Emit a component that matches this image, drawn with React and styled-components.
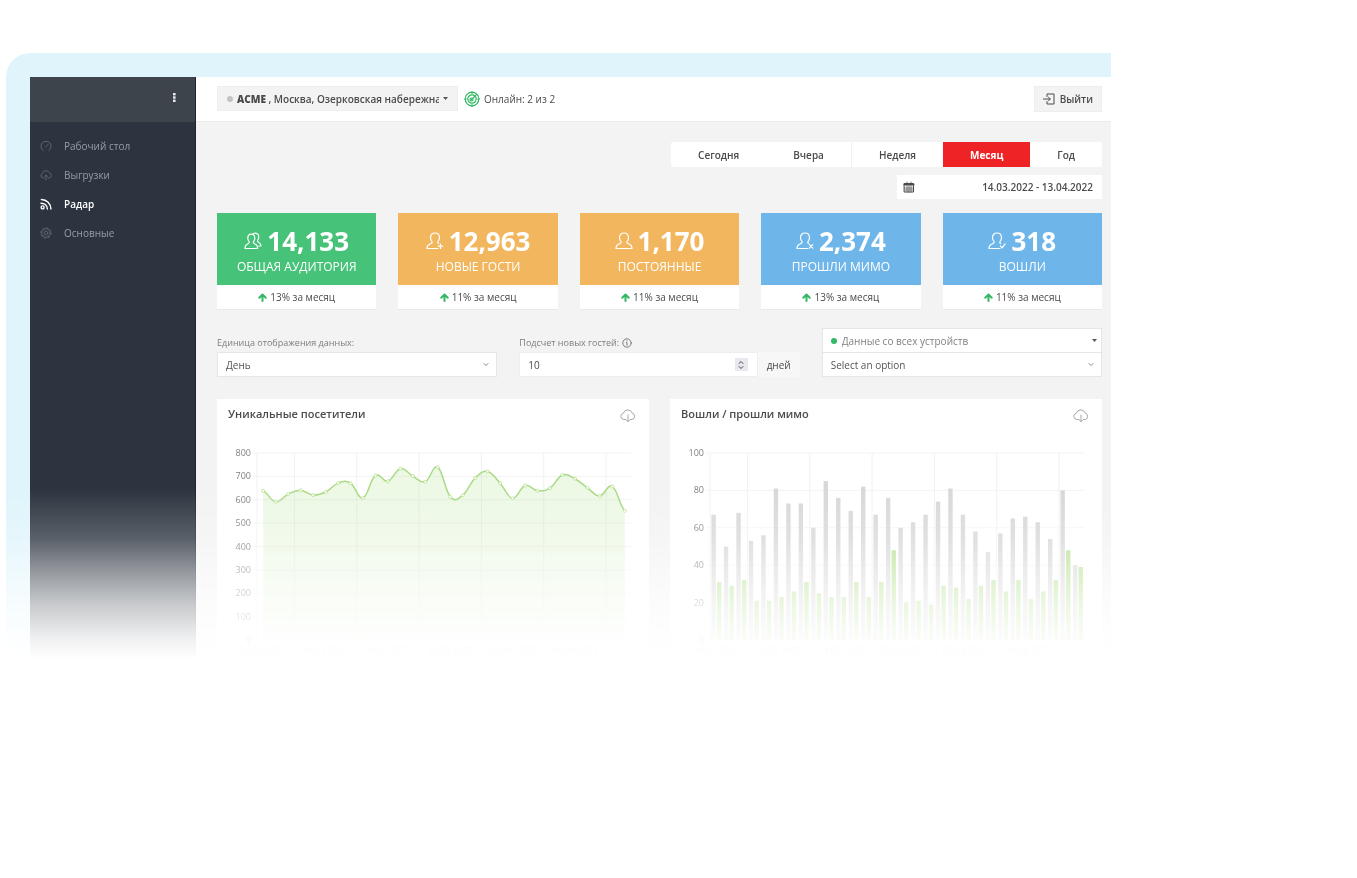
import React from "react";
import styled, { createGlobalStyle, css } from "styled-components";

const GlobalStyle = createGlobalStyle`
  *, *::before, *::after { box-sizing: border-box; }
  body {
    margin: 0;
    background: #fff;
    color: #4b4b4b;
    font-family: "Open Sans", "Noto Sans", sans-serif;
    font-size: 10px;
    line-height: 16px;
  }
  button, input, select { font: inherit; color: inherit; margin: 0; }
  button { cursor: pointer; }
`;

const Page = styled.div`
  padding: 53px 246px 0 6px;
`;

const Frame = styled.div`
  display: flex;
  min-height: 606px;
  border: solid #dff4fb;
  border-width: 24px 0 0 24px;
  border-top-left-radius: 24px;
  mask-image: linear-gradient(
    #000 0, #000 436px, rgba(0, 0, 0, 0.78) 486px, rgba(0, 0, 0, 0.5) 519px,
    rgba(0, 0, 0, 0.26) 552px, rgba(0, 0, 0, 0.07) 586px, transparent 606px
  );
`;

const Sidebar = styled.aside`
  flex: 0 0 166px;
  background: #2c343f;
  border-right: 1px solid #1e252e;
`;

const SidebarTop = styled.div`
  display: flex;
  align-items: center;
  justify-content: flex-end;
  height: 45px;
  padding: 0 17px 4px 0;
  background: #3d444c;
`;

const MenuButton = styled.button`
  display: flex;
  padding: 0;
  border: 0;
  background: none;
  color: #e8eaec;
`;

const Nav = styled.nav`
  display: flex;
  flex-direction: column;
  padding-top: 9px;
`;

const NavLink = styled.a`
  display: flex;
  align-items: center;
  gap: 12px;
  height: 29px;
  padding-left: 10px;
  color: ${(p) => (p.$active ? "#fff" : "#989da4")};
  font-weight: ${(p) => (p.$active ? 600 : 400)};
  text-decoration: none;
  svg { color: ${(p) => (p.$active ? "#fff" : "#5d656f")}; }
`;

const Main = styled.main`
  flex: 1;
  min-width: 0;
  background: #f3f3f3;
`;

const Header = styled.header`
  display: flex;
  align-items: flex-start;
  height: 45px;
  padding: 9px 9px 0 21px;
  background: #fff;
  border-bottom: 1px solid #ececec;
`;

const PlaceButton = styled.button`
  display: flex;
  align-items: center;
  gap: 4px;
  width: 241px;
  height: 25px;
  padding: 0 9px;
  border: 1px solid #eeeeee;
  background: #f3f3f3;
  font-weight: 600;
`;

const PlaceName = styled.span`
  flex: 1;
  overflow: hidden;
  white-space: nowrap;
  text-align: left;
`;

const Dot = styled.span`
  flex: none;
  width: 6px;
  height: 6px;
  border-radius: 50%;
  background: ${(p) => p.$color};
`;

const Online = styled.span`
  display: flex;
  align-items: center;
  gap: 4px;
  height: 26px;
  margin-left: 6px;
`;

const LogoutButton = styled.button`
  display: flex;
  align-items: center;
  gap: 5px;
  height: 26px;
  margin-left: auto;
  padding: 0 8px;
  border: 1px solid #eeeeee;
  background: #f3f3f3;
  font-weight: 600;
`;

const Content = styled.div`
  padding: 20px 9px 0 21px;
`;

const Period = styled.div`
  display: flex;
  flex-direction: column;
  align-items: flex-end;
  gap: 8px;
`;

const Ranges = styled.div`
  display: flex;
  border-radius: 2px;
  background: #fff;
`;

const RangeButton = styled.button`
  height: 25px;
  padding: 0 27px;
  border: 0;
  border-left: ${(p) => (p.$divided ? "1px solid #f0f0f0" : "0")};
  background: ${(p) => (p.$active ? "#ee2326" : "none")};
  color: ${(p) => (p.$active ? "#fff" : "#4b4b4b")};
  font-weight: ${(p) => (p.$active ? 700 : 600)};
`;

const DateField = styled.label`
  display: flex;
  align-items: center;
  width: 205px;
  height: 24px;
  padding: 0 9px 0 6px;
  background: #fff;
`;

const DateInput = styled.input`
  flex: 1;
  min-width: 0;
  padding: 0;
  border: 0;
  background: none;
  font-weight: 600;
  text-align: right;
`;

const Stats = styled.section`
  display: grid;
  grid-template-columns: repeat(5, 1fr);
  gap: 22px;
  margin-top: 14px;
`;

const StatCard = styled.article`
  background: #fff;
  border-bottom: 1px solid #e9e9e9;
  text-align: center;
`;

const StatHead = styled.div`
  height: 72px;
  padding-top: 12px;
  background: ${(p) => p.$color};
  color: #fff;
`;

const StatValue = styled.div`
  display: flex;
  align-items: center;
  justify-content: center;
  gap: 5px;
  font-size: 26px;
  font-weight: 700;
  line-height: 32px;
`;

const StatLabel = styled.div`
  font-size: 12px;
  line-height: 19px;
`;

const StatTrend = styled.div`
  display: flex;
  align-items: center;
  justify-content: center;
  gap: 3px;
  height: 24px;
`;

const Filters = styled.section`
  display: grid;
  grid-template-columns: repeat(3, 1fr);
  align-items: end;
  gap: 22px;
  margin-top: 18px;
`;

const Field = styled.div`
  display: flex;
  flex-direction: column;
`;

const FieldLabel = styled.label`
  display: flex;
  align-items: center;
  gap: 3px;
  height: 19px;
  color: #7d7d7d;
  font-size: 9px;
`;

const controlBox = css`
  display: flex;
  align-items: center;
  height: 25px;
  background: #fff;
  border: 1px solid #e6e6e6;
`;

const SelectBox = styled.div`
  ${controlBox}
  gap: 5px;
  padding: 0 4px 0 8px;
  color: ${(p) => (p.$muted ? "#808080" : "#555")};
  & + & { margin-top: -1px; }
`;

const Select = styled.select`
  flex: 1;
  min-width: 0;
  padding: 0;
  border: 0;
  appearance: none;
  background: none;
`;

const NumberRow = styled.div`
  display: flex;
`;

const NumberBox = styled.div`
  ${controlBox}
  flex: 1;
  padding: 0 9px 0 8px;
  border-color: #eeeeee;
`;

const NumberInput = styled.input`
  flex: 1;
  min-width: 0;
  padding: 0;
  border: 0;
  background: none;
  appearance: textfield;
  &::-webkit-inner-spin-button { display: none; }
`;

const Stepper = styled.span`
  display: flex;
  align-items: center;
  justify-content: center;
  width: 13px;
  height: 13px;
  background: #e8e8ee;
`;

const Unit = styled.span`
  display: flex;
  align-items: center;
  justify-content: center;
  width: 42px;
  background: #f7f7f7;
`;

const Charts = styled.section`
  display: grid;
  grid-template-columns: repeat(2, 1fr);
  gap: 21px;
  margin-top: 22px;
`;

const ChartCard = styled.article`
  background: #fff;
`;

const ChartHead = styled.div`
  display: flex;
  align-items: center;
  justify-content: space-between;
  height: 30px;
  padding: 0 13px 0 11px;
`;

const ChartTitle = styled.h2`
  margin: 0;
  font-size: 11px;
  font-weight: 600;
`;

const DownloadButton = styled.button`
  display: flex;
  padding: 3px 0 0;
  border: 0;
  background: none;
  color: #a6a6a6;
`;

const Chart = styled.svg`
  display: block;
  width: 100%;
  height: auto;
  margin-top: 11px;
  font-size: 9px;
`;

const Icon = ({ size = 12, width = 1, box = 24, children, ...rest }) => (
  <svg width={size} height={size} viewBox={`0 0 ${box} ${box}`} fill="none" stroke="currentColor"
    strokeWidth={width} strokeLinecap="round" strokeLinejoin="round" aria-hidden="true" {...rest}>
    {children}
  </svg>
);

const GaugeIcon = () => (
  <Icon box={12}><path d="M3.200 10.600A5.100 5.100 0 1 1 8.800 10.600M5.500 7 8 4.400" /></Icon>
);
const CloudUpIcon = () => (
  <Icon box={12}><path d="M4 9H3A2.3 2.3 0 0 1 2.4 4.6 3.5 3.5 0 0 1 9 3.6 2.8 2.8 0 0 1 9.3 9H8M6 11V6.2M4.6 7.4 6 6l1.4 1.4" /></Icon>
);
const RadarIcon = () => (
  <Icon box={12} width={1.4}><circle cx="2.6" cy="9.4" r="1.5" /><path d="M1 5.200c3.600 0 6.400 2.400 6.400 5.800M1.400 1.500c5.200 0 9.500 4.200 9.500 9.500" /></Icon>
);
const GearIcon = () => (
  <Icon box={12}><circle cx="6" cy="6" r="4.2" /><circle cx="6" cy="6" r="1.8" /><circle cx="6" cy="6" r="5.2" strokeDasharray="1.6 2.48" /></Icon>
);
const CloudDownIcon = () => (
  <Icon size={16} box={16}><path d="M5.500 11.500H3.800A3.200 3.200 0 0 1 3.300 5.200 4.700 4.700 0 0 1 12.200 5 3.400 3.400 0 0 1 12.200 11.500H10.500M8 7v6.500M6.300 12 8 13.700l1.700-1.700" /></Icon>
);

const LONE_PERSON = "M1 16.500c0-2.800.7-3.600 2.600-4.300 1.800-.7 2.900-1 2.600-2.400C5 8.600 4.500 7.200 4.500 5.600 4.500 2.900 6.300 1 9 1s4.500 1.900 4.500 4.600c0 1.600-.5 3-1.700 4.200-.3 1.400.8 1.700 2.600 2.400 1.900.7 2.600 1.500 2.600 4.300z";
const MARKED_PERSON = "M12 16.500H1c0-2.800.7-3.600 2.600-4.300 1.800-.7 2.900-1 2.600-2.400C5 8.600 4.500 7.200 4.500 5.600 4.500 2.900 6.300 1 9 1s4.500 1.900 4.500 4.600c0 1.600-.5 3-1.700 4.200-.2.9.1 1.300.8 1.600";
const FRONT_PERSON = "M1 16.500c0-2.800.6-3.600 2.200-4.300 1.500-.7 2.300-1 2-2.300C4.200 8.800 3.800 7.700 3.800 6.200 3.800 3.900 5.200 2.200 7.300 2.200s3.500 1.700 3.500 4c0 1.500-.4 2.600-1.400 3.700-.3 1.300.5 1.600 2 2.300 1.600.7 2.200 1.500 2.200 4.300z";

const personShapes = {
  pair: [FRONT_PERSON, "M9.500 1.600C12 .2 15 2 14.800 5.200c-.1 1.500-.5 2.500-1.300 3.400-.2 1.200.4 1.500 1.600 2.100 1.500.7 1.900 1.300 1.900 3.300h-2.200"],
  plus: [MARKED_PERSON, "M14.500 12v4.400M12.300 14.200h4.400"],
  none: [LONE_PERSON],
  cross: [MARKED_PERSON, "M13.300 12.600l3.400 3.600M16.700 12.600l-3.400 3.600"],
  check: [MARKED_PERSON, "M12.400 14l1.700 1.900 3-4"],
};

const PersonIcon = ({ mark }) => (
  <Icon size={18} box={18} width={1.2}>
    {personShapes[mark].map((d) => <path key={d} d={d} />)}
  </Icon>
);

const OnlineIcon = () => (
  <Icon size={16} box={16} width={1.2} color="#35b865">
    <circle cx="8" cy="8" r="6.8" /><circle cx="8" cy="8" r="4.2" />
    <path d="M6.500 9.500 12.700 3.300M8 .6v1.800M8 13.600v1.800M.6 8h1.800M13.600 8h1.800" /><circle cx="7.5" cy="8.5" r="1.5" />
  </Icon>
);

const CaretIcon = () => (
  <svg width="5" height="3" viewBox="0 0 5 3" aria-hidden="true"><path d="M0 0h5L2.500 3z" fill="#555" /></svg>
);
const ChevronIcon = () => (
  <Icon size={12} box={12} color="#888"><path d="M4 4.500l2 2 2-2" /></Icon>
);
const ArrowUpIcon = () => (
  <Icon size={9} box={9} width={2} color="#35b865"><path d="M4.500 8V1.500M1.300 4.700 4.500 1.500 7.700 4.700" /></Icon>
);

const nav = [
  { label: "Рабочий стол", icon: <GaugeIcon /> },
  { label: "Выгрузки", icon: <CloudUpIcon /> },
  { label: "Радар", icon: <RadarIcon />, active: true },
  { label: "Основные", icon: <GearIcon /> },
];

const ranges = [
  { label: "Сегодня" },
  { label: "Вчера" },
  { label: "Неделя", divided: true },
  { label: "Месяц", active: true },
  { label: "Год" },
];

const stats = [
  { value: "14,133", label: "ОБЩАЯ АУДИТОРИЯ", trend: "13% за месяц", color: "#46c279", mark: "pair" },
  { value: "12,963", label: "НОВЫЕ ГОСТИ", trend: "11% за месяц", color: "#f2b65e", mark: "plus" },
  { value: "1,170", label: "ПОСТОЯННЫЕ", trend: "11% за месяц", color: "#f2b65e", mark: "none" },
  { value: "2,374", label: "ПРОШЛИ МИМО", trend: "13% за месяц", color: "#6eb6ea", mark: "cross" },
  { value: "318", label: "ВОШЛИ", trend: "11% за месяц", color: "#6eb6ea", mark: "check" },
];

const visitors = [638, 591, 624, 641, 620, 633, 671, 671, 607, 704, 679, 733, 701, 677, 739, 613, 619, 693, 721,
  671, 606, 661, 639, 650, 706, 690, 651, 616, 657, 553];
const passed = [67, 50, 68, 53, 56, 81, 73, 73, 60, 85, 76, 69, 82, 67, 76, 60, 63, 67, 74, 81, 67, 58, 47, 57, 65,
  66, 63, 54, 80, 40];
const entered = [31, 29, 32, 21, 21, 23, 26, 31, 25, 23, 23, 31, 23, 31, 48, 20, 21, 19, 29, 28, 22, 29, 32, 26, 32,
  22, 26, 32, 48, 39];
const dates = ["14.03.2022", "19.03.2022", "24.03.2022", "29.03.2022", "03.04.2022", "08.04.2022"];

const TOP = 13;
const BOTTOM = 200;
const LEFT = 40;
const RIGHT = 414;
const STEP = (RIGHT - LEFT) / 30;
const scaleY = (value, max) => BOTTOM - (value / max) * (BOTTOM - TOP);

const Axes = ({ max, tick }) => {
  const ticks = Array.from({ length: max / tick + 1 }, (_, i) => i * tick);
  return (
    <>
      {ticks.map((t) => (
        <g key={t}>
          <line x1={LEFT - 4} x2={RIGHT} y1={scaleY(t, max)} y2={scaleY(t, max)} stroke="#f3f3f3" />
          <text x={LEFT - 6} y={scaleY(t, max) + 3} textAnchor="end" fill="#808080">{t}</text>
        </g>
      ))}
      {[0, 3, 8, 13, 18, 23, 28].map((i) => (
        <line key={i} x1={LEFT + i * STEP} x2={LEFT + i * STEP} y1={TOP} y2={BOTTOM} stroke="#f1f1f1" />
      ))}
      {dates.map((d, i) => (
        <text key={d} x={LEFT + (i * 5 + 0.5) * STEP} y={214} textAnchor="middle" fill="#808080">{d}</text>
      ))}
    </>
  );
};

const smoothPath = (points) => {
  let d = `M${points[0][0]} ${points[0][1]}`;
  const slope = (i) => {
    const a = points[Math.max(i - 1, 0)];
    const b = points[Math.min(i + 1, points.length - 1)];
    return (b[1] - a[1]) * 0.2;
  };
  for (let i = 1; i < points.length; i++) {
    const [x0, y0] = points[i - 1];
    const [x1, y1] = points[i];
    const k = (x1 - x0) * 0.4;
    d += `C${x0 + k} ${y0 + slope(i - 1)} ${x1 - k} ${y1 - slope(i)} ${x1} ${y1}`;
  }
  return d;
};

const VisitorsChart = () => {
  const points = visitors.map((v, i) => [LEFT + (i + 0.5) * STEP, scaleY(v, 800)]);
  const line = smoothPath(points);
  return (
    <Chart viewBox="0 0 432 220" role="img" aria-label="Уникальные посетители">
      <Axes max={800} tick={100} />
      <path d={`${line}V${BOTTOM}H${points[0][0]}Z`} fill="#a6dc7c" fillOpacity="0.2" />
      <path d={line} fill="none" stroke="#a9da85" strokeWidth="1.5" />
      {points.map(([x, y]) => <circle key={x} cx={x} cy={y} r="1.5" fill="#fff" stroke="#b5e08f" strokeWidth="0.8" />)}
    </Chart>
  );
};

const PassedChart = () => (
  <Chart viewBox="0 0 432 220" role="img" aria-label="Вошли / прошли мимо">
    <Axes max={100} tick={20} />
    {passed.map((v, i) => (
      <g key={i}>
        <rect x={LEFT + i * STEP + 1.4} y={scaleY(v, 100)} width="4.4" height={BOTTOM - scaleY(v, 100)} fill="#d8d8d8" />
        <rect x={LEFT + i * STEP + 7} y={scaleY(entered[i], 100)} width="4.4" height={BOTTOM - scaleY(entered[i], 100)} fill="#b5e290" />
      </g>
    ))}
  </Chart>
);

const ChartPanel = ({ title, children }) => (
  <ChartCard>
    <ChartHead>
      <ChartTitle>{title}</ChartTitle>
      <DownloadButton type="button" aria-label="Скачать"><CloudDownIcon /></DownloadButton>
    </ChartHead>
    {children}
  </ChartCard>
);

export default function App() {
  return (
    <Page>
      <GlobalStyle />
      <Frame>
        <Sidebar>
          <SidebarTop>
            <MenuButton type="button" aria-label="Меню">
              <svg width="8" height="9" viewBox="0 0 8 9" fill="currentColor" aria-hidden="true">
                <rect x="3" y="0" width="2.6" height="2.4" /><rect x="3" y="3.3" width="2.6" height="2.4" /><rect x="3" y="6.6" width="2.6" height="2.4" />
              </svg>
            </MenuButton>
          </SidebarTop>
          <Nav>
            {nav.map((n) => (
              <NavLink key={n.label} href="#" $active={n.active}>{n.icon}{n.label}</NavLink>
            ))}
          </Nav>
        </Sidebar>
        <Main>
          <Header>
            <PlaceButton type="button">
              <Dot $color="#c4c4c4" />
              <PlaceName><b>ACME</b> , Москва, Озерковская набережная</PlaceName>
              <CaretIcon />
            </PlaceButton>
            <Online><OnlineIcon />Онлайн: 2 из 2</Online>
            <LogoutButton type="button">
              <Icon box={12}><path d="M4 3.500V1h7v10H4V8.500M.5 6h6.500M5.500 4.300 7.300 6 5.500 7.700" /></Icon>
              Выйти
            </LogoutButton>
          </Header>
          <Content>
            <Period>
              <Ranges>
                {ranges.map((r) => (
                  <RangeButton key={r.label} type="button" $active={r.active} $divided={r.divided}>{r.label}</RangeButton>
                ))}
              </Ranges>
              <DateField>
                <Icon box={12}>
                  <path d="M1.500 2.500h9v8.500h-9z" /><path d="M1.500 3.500h9" strokeWidth="2" /><path d="M4 1v2M8 1v2M4 5v6M6 5v6M8 5v6M1.500 7h9M1.500 9h9" strokeWidth="0.7" />
                </Icon>
                <DateInput aria-label="Период" defaultValue="14.03.2022 - 13.04.2022" />
              </DateField>
            </Period>
            <Stats>
              {stats.map((s) => (
                <StatCard key={s.label}>
                  <StatHead $color={s.color}>
                    <StatValue><PersonIcon mark={s.mark} />{s.value}</StatValue>
                    <StatLabel>{s.label}</StatLabel>
                  </StatHead>
                  <StatTrend><ArrowUpIcon />{s.trend}</StatTrend>
                </StatCard>
              ))}
            </Stats>
            <Filters>
              <Field>
                <FieldLabel htmlFor="unit">Единица отображения данных:</FieldLabel>
                <SelectBox>
                  <Select id="unit"><option>День</option></Select>
                  <ChevronIcon />
                </SelectBox>
              </Field>
              <Field>
                <FieldLabel htmlFor="days">
                  Подсчет новых гостей:
                  <Icon size={10} box={10}><circle cx="5" cy="5" r="4.2" /><path d="M4.300 4.500H5v2.700M5 2.700v.2" /></Icon>
                </FieldLabel>
                <NumberRow>
                  <NumberBox>
                    <NumberInput id="days" type="number" defaultValue="10" />
                    <Stepper><Icon size={10} box={10}><path d="M3 3.500l2-2 2 2M3 6.500l2 2 2-2" /></Icon></Stepper>
                  </NumberBox>
                  <Unit>дней</Unit>
                </NumberRow>
              </Field>
              <Field>
                <SelectBox $muted>
                  <Dot $color="#35b865" />
                  <Select aria-label="Устройства"><option>Данные со всех устройств</option></Select>
                  <CaretIcon />
                </SelectBox>
                <SelectBox>
                  <Select aria-label="Опция"><option>Select an option</option></Select>
                  <ChevronIcon />
                </SelectBox>
              </Field>
            </Filters>
            <Charts>
              <ChartPanel title="Уникальные посетители"><VisitorsChart /></ChartPanel>
              <ChartPanel title="Вошли / прошли мимо"><PassedChart /></ChartPanel>
            </Charts>
          </Content>
        </Main>
      </Frame>
    </Page>
  );
}
